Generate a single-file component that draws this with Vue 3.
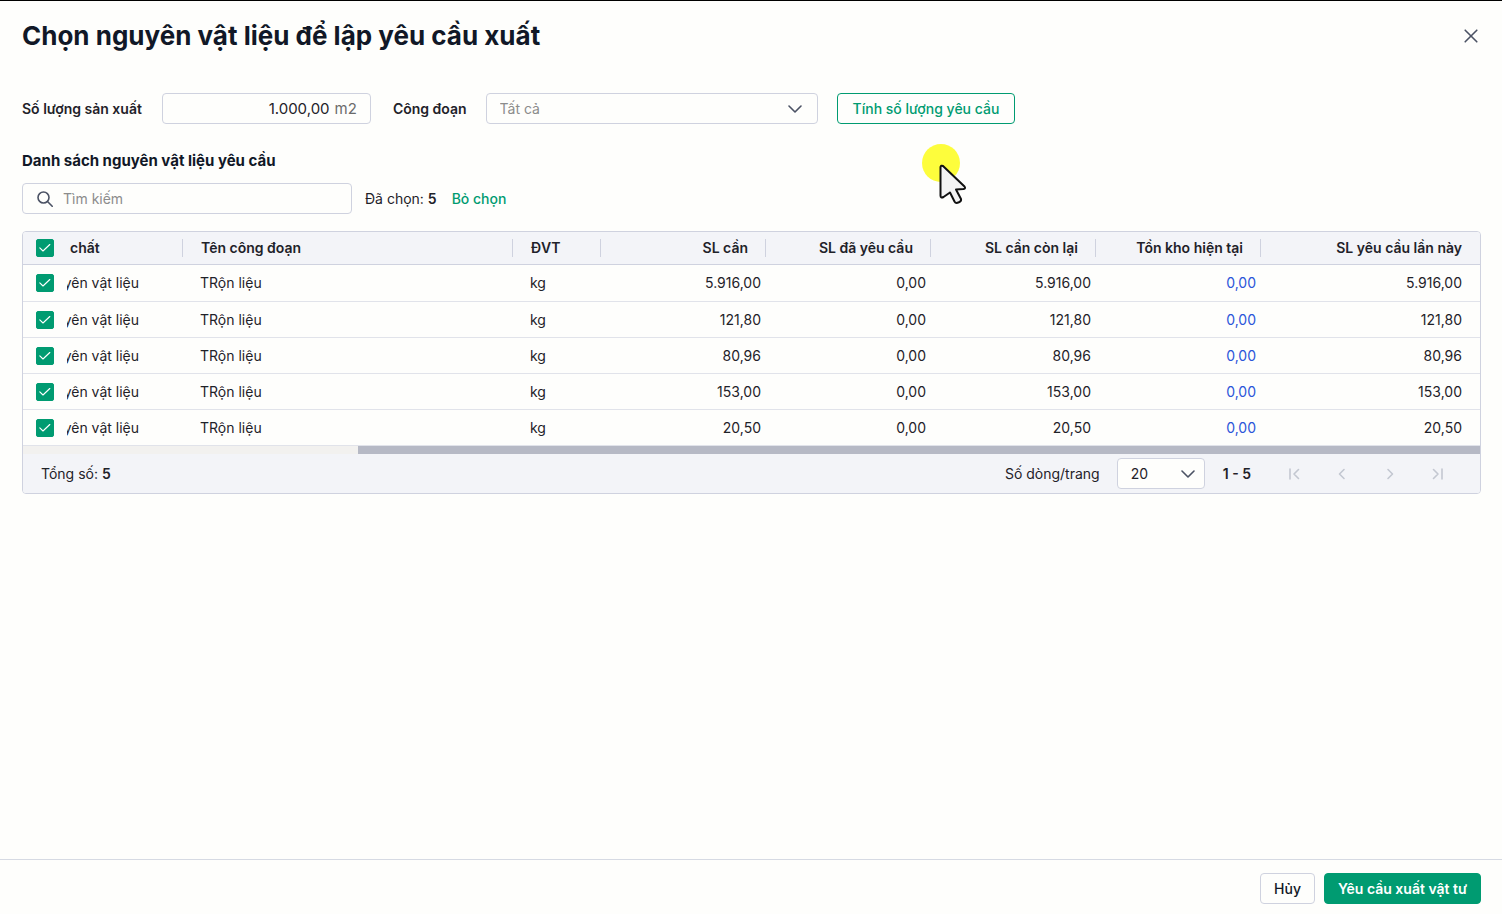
<script setup>
import { ref, computed } from 'vue'

const quantity = ref('1.000,00')
const stage = ref('')
const search = ref('')
const pageSize = ref(20)

const columns = [
  { key: 'kind', label: 'chất', align: 'kind' },
  { key: 'stage', label: 'Tên công đoạn', align: 'start' },
  { key: 'unit', label: 'ĐVT', align: 'start' },
  { key: 'need', label: 'SL cần', align: 'end' },
  { key: 'asked', label: 'SL đã yêu cầu', align: 'end' },
  { key: 'left', label: 'SL cần còn lại', align: 'end' },
  { key: 'stock', label: 'Tồn kho hiện tại', align: 'end' },
  { key: 'request', label: 'SL yêu cầu lần này', align: 'end' }
]

const rows = ref(
  ['5.916,00', '121,80', '80,96', '153,00', '20,50'].map((amount, i) => ({
    id: i + 1,
    checked: true,
    kind: 'yên vật liệu',
    stage: 'TRộn liệu',
    unit: 'kg',
    need: amount,
    asked: '0,00',
    left: amount,
    stock: '0,00',
    request: amount
  }))
)

const selected = computed(() => rows.value.filter((r) => r.checked).length)
const allChecked = computed({
  get: () => selected.value === rows.value.length,
  set: (value) => rows.value.forEach((r) => (r.checked = value))
})

const pagers = [
  { label: 'Trang đầu', path: 'M4 3v10M12.5 3.5 8 8l4.5 4.5' },
  { label: 'Trang trước', path: 'M10 3.5 5.5 8l4.5 4.5' },
  { label: 'Trang sau', path: 'M6 3.5l4.5 4.5L6 12.5' },
  { label: 'Trang cuối', path: 'M12 3v10M3.5 3.5 8 8l-4.500 4.500' }
]
</script>

<template>
  <div class="dialog">
    <header class="head">
      <h1>Chọn nguyên vật liệu để lập yêu cầu xuất</h1>
      <button class="close" type="button" aria-label="Đóng">
        <svg width="14" height="14" viewBox="0 0 14 14"><path d="M1.2 1.2 12.8 12.8M12.8 1.2 1.2 12.8" /></svg>
      </button>
    </header>

    <main>
      <div class="filters">
        <label class="caption" for="quantity">Số lượng sản xuất</label>
        <div class="box quantity">
          <input id="quantity" v-model="quantity" type="text" />
          <span>m2</span>
        </div>
        <label class="caption stage-caption" for="stage">Công đoạn</label>
        <div class="picker stage">
          <select id="stage" v-model="stage">
            <option value="">Tất cả</option>
          </select>
          <svg width="14" height="8" viewBox="0 0 14 8"><path d="M1 1l6 6 6-6" /></svg>
        </div>
        <button class="btn outline" type="button">Tính số lượng yêu cầu</button>
      </div>

      <h2>Danh sách nguyên vật liệu yêu cầu</h2>

      <div class="tools">
        <label class="box search">
          <svg width="16" height="16" viewBox="0 0 16 16"><circle cx="6.5" cy="6.5" r="5.5" /><path d="M10.5 10.5 15.2 15.2" /></svg>
          <input v-model="search" type="text" placeholder="Tìm kiếm" aria-label="Tìm kiếm" />
        </label>
        <span>Đã chọn: <b>{{ selected }}</b></span>
        <button class="clear" type="button" @click="allChecked = false">Bỏ chọn</button>
      </div>

      <section class="grid">
        <table>
          <colgroup>
            <col class="c-check" />
            <col v-for="c in columns" :key="c.key" :class="'c-' + c.key" />
          </colgroup>
          <thead>
            <tr>
              <th class="check">
                <label class="tick">
                  <input v-model="allChecked" type="checkbox" aria-label="Chọn tất cả" />
                  <svg viewBox="0 0 18 18"><path d="M3.8 8.8 7 12l6.8-6.5" /></svg>
                </label>
              </th>
              <th v-for="c in columns" :key="c.key" :class="c.align" scope="col">{{ c.label }}</th>
            </tr>
          </thead>
          <tbody>
            <tr v-for="r in rows" :key="r.id">
              <td class="check">
                <label class="tick">
                  <input v-model="r.checked" type="checkbox" :aria-label="'Chọn dòng ' + r.id" />
                  <svg viewBox="0 0 18 18"><path d="M3.8 8.8 7 12l6.8-6.5" /></svg>
                </label>
              </td>
              <td v-for="c in columns" :key="c.key" :class="[c.align, c.key]">
                <span v-if="c.key === 'kind'" class="scrolled">{{ r.kind }}</span>
                <a v-else-if="c.key === 'stock'" href="#">{{ r.stock }}</a>
                <template v-else>{{ r[c.key] }}</template>
              </td>
            </tr>
          </tbody>
        </table>
        <div class="scroll"><div class="thumb"></div></div>
        <div class="paging">
          <span class="total">Tổng số: <b>{{ rows.length }}</b></span>
          <label for="size">Số dòng/trang</label>
          <div class="picker size">
            <select id="size" v-model="pageSize">
              <option :value="20">20</option>
            </select>
            <svg width="14" height="8" viewBox="0 0 14 8"><path d="M1 1l6 6 6-6" /></svg>
          </div>
          <b>1 - {{ rows.length }}</b>
          <nav>
            <button v-for="p in pagers" :key="p.label" type="button" :aria-label="p.label" disabled>
              <svg width="16" height="16" viewBox="0 0 16 16"><path :d="p.path" /></svg>
            </button>
          </nav>
        </div>
      </section>
    </main>

    <footer>
      <button class="btn plain" type="button">Hủy</button>
      <button class="btn primary" type="button">Yêu cầu xuất vật tư</button>
    </footer>

    <svg class="pointer" width="46" height="64" viewBox="0 0 46 64" aria-hidden="true">
      <circle cx="20" cy="20" r="19" fill="#fdfd3c" stroke="none" />
      <path d="M19.5 24Q20 22 22 23L43.500 43.500q1.500 2-1 2.500l-7.500.500 5 9.500q.5 2-1.500 3l-2 .8q-2 .5-3-1.300l-4.500-9-6.500 4.500q-3 1.500-3-1.500z" fill="#f3f3f3" stroke="#111" />
    </svg>
  </div>
</template>

<style>
body {
  margin: 0;
  background: #fefefc;
}
</style>

<style scoped>
.dialog {
  position: relative;
  display: flex;
  flex-direction: column;
  box-sizing: border-box;
  min-height: 100vh;
  border-top: 1px solid #000;
  color: #1f2229;
  font: 400 14px/20px Inter, "Noto Sans", sans-serif;
}
.dialog * {
  box-sizing: border-box;
}
svg {
  fill: none;
  stroke: #4b5264;
  stroke-width: 1.6;
  stroke-linecap: round;
  stroke-linejoin: round;
}
button,
input,
select {
  margin: 0;
  font: inherit;
  color: inherit;
}
button {
  cursor: pointer;
}
b {
  font-weight: 600;
}
.head {
  display: flex;
  align-items: center;
  justify-content: space-between;
  padding: 19px 22px 0;
}
h1 {
  margin: 0;
  color: #111827;
  font-size: 26px;
  line-height: 32px;
  font-weight: 700;
}
.close {
  display: flex;
  padding: 2px;
  border: 0;
  background: none;
}
main {
  flex: 1;
  padding: 41px 21px 24px 22px;
}
.filters,
.tools {
  display: flex;
  align-items: center;
}
.caption {
  font-weight: 600;
}
.box {
  display: flex;
  align-items: center;
  height: 31px;
  padding: 0 13px;
  border: 1px solid #cfd2df;
  border-radius: 4px;
}
.box input {
  flex: 1;
  min-width: 0;
  padding: 0;
  border: 0;
  outline: 0;
  background: none;
}
.quantity {
  width: 209px;
  margin-left: 20px;
  gap: 5px;
  font-size: 15px;
}
.quantity input {
  text-align: right;
}
.quantity span {
  color: #6b6b6b;
}
.stage-caption {
  margin-left: 22px;
}
.picker {
  display: grid;
  align-items: center;
}
.picker select,
.picker svg {
  grid-area: 1 / 1;
}
.picker select {
  width: 100%;
  height: 31px;
  padding: 0 13px;
  border: 1px solid #cfd2df;
  border-radius: 4px;
  appearance: none;
  background: #fefefc;
}
.picker svg {
  justify-self: end;
  pointer-events: none;
}
.stage {
  width: 332px;
  margin: 0 19px;
}
.stage select {
  color: #8c8c8c;
}
.stage svg {
  margin-right: 16px;
}
.btn {
  height: 31px;
  padding: 0 13px;
  border: 1px solid #cfd2df;
  border-radius: 4px;
  background: none;
}
.outline {
  padding: 0 15px;
  border-color: #009b71;
  color: #009b71;
  font-weight: 500;
}
h2 {
  margin: 27px 0 12px;
  color: #111827;
  font-size: 15px;
  line-height: 20px;
  font-weight: 700;
}
.search {
  width: 330px;
  margin-right: 13px;
  padding: 0 14px;
  gap: 10px;
}
.search input::placeholder {
  color: #8c8c8c;
  opacity: 1;
}
.clear {
  margin-left: 15px;
  padding: 0;
  border: 0;
  background: none;
  color: #009b71;
  font-weight: 500;
}
.grid {
  margin-top: 17px;
  overflow: hidden;
  border: 1px solid #cfd2df;
  border-radius: 4px;
}
table {
  width: 100%;
  table-layout: fixed;
  border-collapse: separate;
  border-spacing: 0;
}
.c-check {
  width: 44px;
}
.c-kind {
  width: 116px;
}
.c-stage {
  width: 330px;
}
.c-unit {
  width: 88px;
}
.c-need,
.c-asked,
.c-left,
.c-stock {
  width: 165px;
}
th,
td {
  padding: 0;
  text-align: left;
  white-space: nowrap;
}
th {
  height: 33px;
  border-bottom: 1px solid #cfd2df;
  background: #f3f4f8 linear-gradient(#cfd2df, #cfd2df) right center / 1px 18px no-repeat;
  font-weight: 600;
}
th.check,
th:last-child {
  background-image: none;
}
td {
  height: 36px;
  border-bottom: 1px solid #e1e3ea;
}
tbody tr:first-child td {
  height: 37px;
}
th.start {
  padding-left: 18px;
}
td.start {
  padding-left: 17px;
}
th.kind {
  padding-left: 3px;
}
.end {
  text-align: right;
}
td.end {
  padding-right: 5px;
}
th.end,
td.end:last-child {
  padding-right: 18px;
}
.scrolled {
  display: flex;
  justify-content: flex-end;
  width: 72px;
  overflow: hidden;
}
td a {
  color: #2b55d9;
  text-decoration: none;
}
.check {
  padding-left: 13px;
}
.tick {
  display: grid;
  width: 18px;
  height: 18px;
}
.tick input,
.tick svg {
  grid-area: 1 / 1;
  width: 18px;
  height: 18px;
}
.tick input {
  appearance: none;
  border: 1px solid #cfd2df;
  border-radius: 2px;
}
.tick input:checked {
  border-color: #009b71;
  background: #009b71;
}
.tick svg {
  stroke: #fff;
  stroke-width: 1.1;
  pointer-events: none;
}
.scroll {
  height: 8px;
  background: #f2f1ef;
}
.thumb {
  width: 77%;
  height: 100%;
  margin-left: auto;
  background: #b6b9c5;
}
.paging {
  display: flex;
  align-items: center;
  height: 39px;
  padding: 0 26px 0 18px;
  background: #f3f4f8;
}
.total {
  margin-right: auto;
}
.size {
  width: 88px;
  margin: 0 18px 0 17px;
}
.size svg {
  margin-right: 10px;
}
nav {
  display: flex;
  gap: 16px;
  margin-left: 27px;
}
nav button {
  display: flex;
  justify-content: center;
  width: 32px;
  padding: 0;
  border: 0;
  background: none;
}
nav svg {
  stroke: #c3c7d1;
}
footer {
  display: flex;
  justify-content: flex-end;
  gap: 9px;
  padding: 13px 21px 10px;
  border-top: 1px solid #d6dae3;
}
.plain {
  color: #111827;
  font-weight: 500;
}
.primary {
  border-color: #009b71;
  background: #009b71;
  color: #fff;
  font-weight: 600;
}
.pointer {
  position: absolute;
  top: 142px;
  left: 921px;
  stroke-width: 2;
  pointer-events: none;
}
</style>
